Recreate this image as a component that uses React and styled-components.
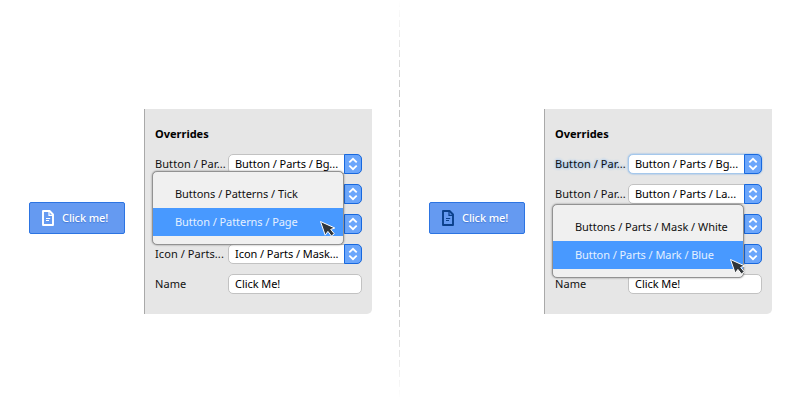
import React from "react";
import styled, { createGlobalStyle } from "styled-components";

const GlobalStyle = createGlobalStyle`
  * { box-sizing: border-box; }
  body { margin: 0; background: #fff; font-family: "Noto Sans", sans-serif; }
`;

const Page = styled.main`
  position: relative;
  display: grid;
  grid-template-columns: 400px 400px;
  width: 800px;
  height: 400px;
  overflow: hidden;
`;

const Divider = styled.div`
  position: absolute;
  left: 399px;
  top: 0;
  width: 1px;
  height: 400px;
  background: repeating-linear-gradient(#c8c8c8 0 7px, transparent 7px 10px);
  mask-image: linear-gradient(transparent, #000 25%, #000 75%, transparent);
`;

const Example = styled.section`
  display: flex;
  align-items: flex-start;
  padding: 109px 0 0 29px;
`;

const ClickButton = styled.button`
  display: flex;
  align-items: center;
  width: 96px;
  height: 32px;
  margin: 93px 19px 0 0;
  padding: 0 0 0 12px;
  gap: 8px;
  border: 1px solid #2c74e2;
  border-radius: 2px;
  background: #659af1;
  color: #fff;
  font: 500 11px/16px "Noto Sans", sans-serif;
  letter-spacing: -0.1px;
  text-shadow: 0 1px 1px rgba(20, 70, 160, 0.4);
  white-space: nowrap;
  svg { flex: none; color: ${(p) => p.$iconColor}; }
`;

const Panel = styled.div`
  position: relative;
  width: 228px;
  height: 205px;
  padding: 17px 10px 0;
  border-left: 1px solid #a9a9a9;
  border-bottom-right-radius: 5px;
  background: #e6e6e6;
  color: #111;
  font-size: 11px;
`;

const Title = styled.h2`
  margin: 0 0 12px;
  font-size: 11px;
  line-height: 16px;
  font-weight: 700;
  color: #000;
`;

const Rows = styled.div`
  display: grid;
  gap: 10px;
`;

const Row = styled.div`
  display: grid;
  grid-template-columns: 73px 134px;
  height: 20px;
  line-height: 20px;
  white-space: nowrap;
`;

const Label = styled.span`
  letter-spacing: 0.08px;
  text-shadow: ${(p) => (p.$focused ? "0 0 3px #7ab4f2, 0 0 3px #b5d5f5" : "none")};
`;

const Field = styled.div`
  display: flex;
  height: 20px;
  padding-left: 6px;
  border: 1px solid ${(p) => (p.$focused ? "#a5c8ec" : "#c2c2c2")};
  border-radius: 5px;
  background: #fff;
  color: #000;
  line-height: 18px;
  letter-spacing: -0.06px;
  box-shadow: ${(p) => (p.$focused ? "0 0 2px #6ea9e8" : "none")};
`;

const Stepper = styled.span`
  display: grid;
  place-items: center;
  width: 18px;
  height: 20px;
  margin: -1px -1px 0 auto;
  border: 1px solid #1768de;
  border-radius: 0 5px 5px 0;
  background: #6ba6fb;
`;

const Menu = styled.div`
  position: absolute;
  left: 7px;
  top: ${(p) => p.$top}px;
  width: 192px;
  height: 74px;
  padding: 8px 0;
  border: 1px solid #929292;
  border-radius: 5px;
  background: #f0f0f0;
  box-shadow: 0 0 2px rgba(0, 0, 0, 0.45);
`;

const MenuItem = styled.div`
  height: 28px;
  padding-left: 22px;
  line-height: 28px;
  letter-spacing: ${(p) => (p.$active ? "-0.07px" : "-0.04px")};
  white-space: nowrap;
  background: ${(p) => (p.$active ? "#4899ff" : "transparent")};
  color: ${(p) => (p.$active ? "#e4f0ff" : "#111")};
`;

const Pointer = styled.svg`
  position: absolute;
  left: ${(p) => p.$x}px;
  top: ${(p) => p.$y}px;
`;

function DocumentIcon() {
  return (
    <svg width="12" height="16" viewBox="0 0 12 16" fill="none" stroke="currentColor">
      <path d="M1 1H7.6L11 4.5V15H1Z" strokeWidth="1.9" strokeLinejoin="round" />
      <path d="M7 1V5.4H11" strokeWidth="1.2" />
      <path d="M4 8.5H8.2M4 10.5H7" strokeWidth="1" />
    </svg>
  );
}

function Chevrons() {
  return (
    <svg width="10" height="14" viewBox="0 0 10 14" fill="none" stroke="#fff" strokeWidth="1.8">
      <path d="M1.3 5.4L5 1.8L8.7 5.4M1.3 8.6L5 12.2L8.7 8.6" />
    </svg>
  );
}

function Select({ label, value, focused }) {
  return (
    <Row>
      <Label $focused={focused}>{label}</Label>
      <Field $focused={focused}>
        {value}
        <Stepper><Chevrons /></Stepper>
      </Field>
    </Row>
  );
}

function Overrides({ iconColor, selects, menuTop, options, cursor }) {
  return (
    <Example>
      <ClickButton $iconColor={iconColor}>
        <DocumentIcon />
        Click me!
      </ClickButton>
      <Panel>
        <Title>Overrides</Title>
        <Rows>
          {selects.map((select, index) => (
            <Select key={index} {...select} />
          ))}
          <Row>
            <Label>Name</Label>
            <Field>Click Me!</Field>
          </Row>
        </Rows>
        <Menu $top={menuTop}>
          <MenuItem>{options[0]}</MenuItem>
          <MenuItem $active>{options[1]}</MenuItem>
        </Menu>
        <Pointer $x={cursor[0]} $y={cursor[1]} width="18" height="19" viewBox="0 0 18 19">
          <path d="M1.5 1.5L6.2 15.2L8.9 11.4L12.4 16L15.3 13.8L11.7 9.4L15.8 8Z" fill="#303539" stroke="#fff" strokeWidth="1" />
        </Pointer>
      </Panel>
    </Example>
  );
}

export default function App() {
  return (
    <>
      <GlobalStyle />
      <Page>
        <Overrides
          iconColor="#fff"
          selects={[
            { label: "Button / Par...", value: "Button / Parts / Bg..." },
            {},
            {},
            { label: "Icon / Parts...", value: "Icon / Parts / Mask..." },
          ]}
          menuTop={62}
          options={["Buttons / Patterns / Tick", "Button / Patterns / Page"]}
          cursor={[174, 111]}
        />
        <Overrides
          iconColor="#0b408b"
          selects={[
            { label: "Button / Par...", value: "Button / Parts / Bg...", focused: true },
            { label: "Button / Par...", value: "Button / Parts / La..." },
            {},
            {},
          ]}
          menuTop={95}
          options={["Buttons / Parts / Mask / White", "Button / Parts / Mark / Blue"]}
          cursor={[184, 149]}
        />
        <Divider />
      </Page>
    </>
  );
}
